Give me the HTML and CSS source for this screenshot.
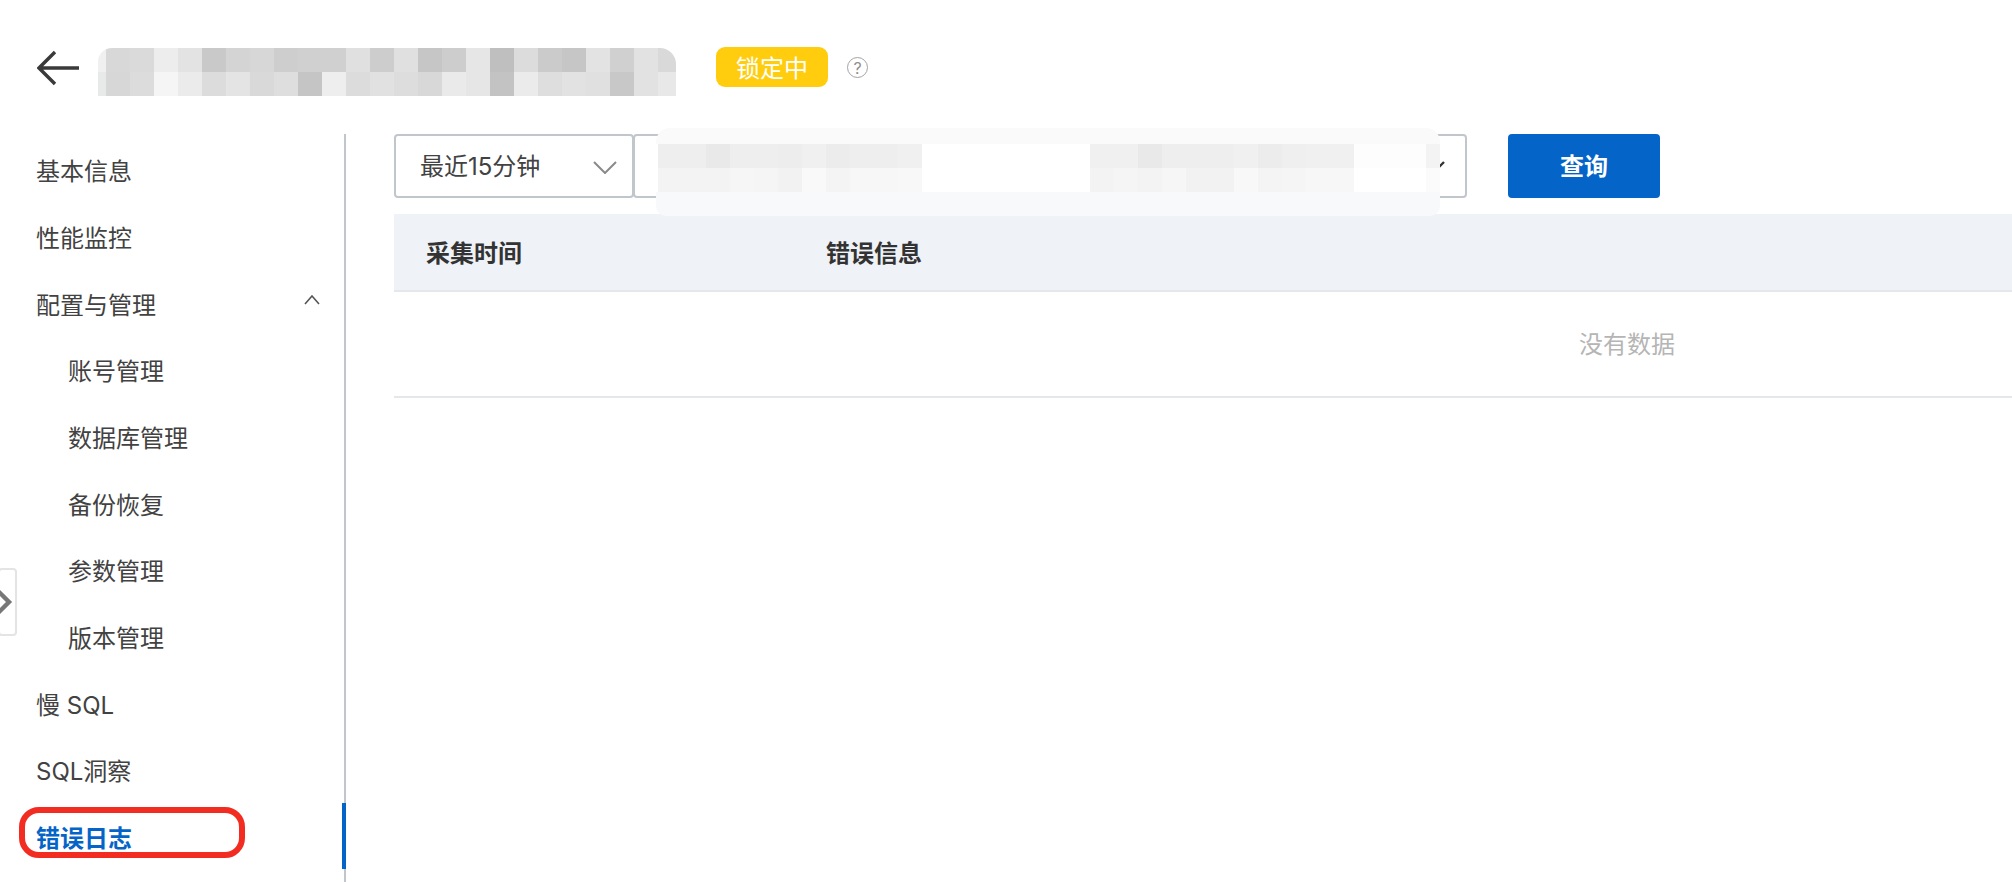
FILE: index.html
```html
<!DOCTYPE html>
<html lang="zh-CN">
<head>
<meta charset="utf-8">
<title>错误日志</title>
<link rel="stylesheet" href="styles.css">
</head>
<body>
<div class="page">
  <header class="top">
    <svg class="back" width="42" height="42" viewBox="0 0 42 42" aria-label="返回"><path d="M42 21H2M18 5L2 21l16 16" fill="none" stroke="#3a3a3a" stroke-width="3.4"/></svg>
    <div class="title-mosaic"><div class="m-a"></div><div class="m-b"></div></div>
    <span class="badge">锁定中</span>
    <span class="help">?</span>
  </header>
  <div class="body">
    <nav class="nav">
      <a class="item">基本信息</a>
      <a class="item">性能监控</a>
      <a class="item">配置与管理
        <svg class="up" width="16" height="10" viewBox="0 0 16 10"><path d="M1 9l7-8 7 8" fill="none" stroke="#555" stroke-width="1.6"/></svg>
      </a>
      <a class="item sub">账号管理</a>
      <a class="item sub">数据库管理</a>
      <a class="item sub">备份恢复</a>
      <a class="item sub">参数管理</a>
      <a class="item sub">版本管理</a>
      <a class="item">慢 SQL</a>
      <a class="item">SQL洞察</a>
      <a class="item active">错误日志<span class="mark"></span></a>
    </nav>
    <main class="main">
      <div class="toolbar">
        <div class="select first">最近15分钟
          <svg class="chev" width="24" height="13" viewBox="0 0 24 13"><path d="M1 1l11 11L23 1" fill="none" stroke="#8a8a8a" stroke-width="2"/></svg>
        </div>
        <div class="select second">
          <svg class="chev" width="24" height="13" viewBox="0 0 24 13"><path d="M1 1l11 11L23 1" fill="none" stroke="#333" stroke-width="2.4"/></svg>
        </div>
        <button class="query">查询</button>
      </div>
      <div class="table">
        <div class="thead">
          <div class="col-time">采集时间</div>
          <div>错误信息</div>
        </div>
        <div class="empty">没有数据</div>
      </div>
      <div class="cover">
        <div class="c-top"></div>
        <div class="c-a"></div>
        <div class="c-b"></div>
        <div class="c-bot"></div>
      </div>
    </main>
  </div>
  <div class="handle">
    <svg width="15" height="30" viewBox="0 0 15 30"><path d="M-2 4l11 11L-2 26" fill="none" stroke="#777" stroke-width="4.4"/></svg>
  </div>
</div>
</body>
</html>
```
FILE: styles.css
```css
* { box-sizing: border-box; }
html, body { margin: 0; padding: 0; background: #fff; }
body {
  font-family: Inter, "Noto Sans CJK SC", sans-serif;
  font-size: 24px;
  color: #424242;
}
.page {
  position: relative;
  width: 2012px;
  height: 882px;
  overflow: hidden;
}

/* header */
.top {
  display: flex;
  align-items: flex-start;
  height: 134px;
  padding: 47px 0 0 37px;
}
.back { flex: none; }
.title-mosaic {
  width: 578px;
  height: 48px;
  margin: 1px 0 0 19px;
  border-radius: 14px 16px 0 0;
  overflow: hidden;
}
.m-a, .m-b { height: 24px; }
.m-a {
  background: linear-gradient(90deg,
    #f0f0f0 0 8px, #d8d8d8 8px 32px, #dadada 32px 56px, #ededed 56px 80px, #e3e3e3 80px 104px,
    #c9c9c9 104px 128px, #d4d4d4 128px 152px, #d7d7d7 152px 176px, #cecece 176px 200px, #d0d0d0 200px 248px,
    #e0e0e0 248px 272px, #cdcdcd 272px 296px, #e0e0e0 296px 320px, #c6c6c6 320px 344px, #cdcdcd 344px 368px,
    #e6e6e6 368px 392px, #bfbfbf 392px 416px, #dcdcdc 416px 440px, #cbcbcb 440px 464px, #c6c6c6 464px 488px,
    #e3e3e3 488px 512px, #d0d0d0 512px 536px, #e2e2e2 536px 560px, #d9d9d9 560px 578px);
}
.m-b {
  background: linear-gradient(90deg,
    #e8eaea 0 8px, #d7d7d7 8px 32px, #dcdcdc 32px 56px, #f5f5f5 56px 80px, #ebebeb 80px 104px,
    #dcdcdc 104px 128px, #e4e4e4 128px 152px, #d9d9d9 152px 176px, #dedede 176px 200px, #c5c5c5 200px 224px,
    #eeeeee 224px 248px, #dcdcdc 248px 272px, #e1e1e1 272px 296px, #dddddd 296px 320px, #d8d8d8 320px 344px,
    #eaeaea 344px 368px, #e6e6e6 368px 392px, #c3c3c3 392px 416px, #ebebeb 416px 440px, #dedede 440px 464px,
    #e2e2e2 464px 488px, #e0e0e0 488px 512px, #c8c8c8 512px 536px, #e2e2e2 536px 560px, #e8e8e8 560px 578px);
}
.badge {
  flex: none;
  display: flex;
  align-items: center;
  justify-content: center;
  width: 112px;
  height: 40px;
  padding-bottom: 2px;
  margin-left: 40px;
  border-radius: 9px;
  background: #ffcd0e;
  color: #fff;
}
.help {
  flex: none;
  display: flex;
  align-items: center;
  justify-content: center;
  width: 21px;
  height: 21px;
  margin: 10px 0 0 19px;
  border: 1.5px solid #a3a3a3;
  border-radius: 50%;
  color: #8f8f8f;
  font-size: 16px;
  line-height: 1;
}

/* layout */
.body { display: flex; height: 748px; }

/* side menu */
.nav {
  flex: none;
  width: 346px;
  padding-top: 4px;
  box-shadow: inset -2px 0 #c0c6cc;
}
.item {
  position: relative;
  display: flex;
  align-items: center;
  height: 66.67px;
  padding: 0 0 3px 36px;
}
.sub { padding-left: 68px; }
.up { position: absolute; right: 26px; top: 24px; }
.active { color: #0564c8; font-weight: 700; }
.active::before {
  content: "";
  position: absolute;
  right: 0;
  top: -2px;
  width: 4px;
  height: 66px;
  background: #0564c8;
}
.mark {
  position: absolute;
  left: 19px;
  top: 2px;
  width: 226px;
  height: 51px;
  border: 6px solid #f32c22;
  border-radius: 20px;
}

/* main */
.main {
  position: relative;
  flex: none;
  width: 2466px;
  margin-left: 48px;
}
.toolbar { display: flex; height: 64px; }
.select {
  position: relative;
  display: flex;
  align-items: center;
  height: 64px;
  padding-bottom: 4px;
  border: 2px solid #c0c6cc;
  border-radius: 4px;
  background: #fff;
}
.first { width: 240px; padding-left: 24px; }
.second { width: 834px; margin-left: -1px; }
.chev { position: absolute; top: 25px; }
.first .chev { right: 15px; }
.second .chev { right: 20px; }
.query {
  width: 152px;
  height: 64px;
  margin-left: 41px;
  padding: 0 0 4px;
  border: 0;
  border-radius: 4px;
  background: #0564c8;
  color: #fff;
  font: 700 24px Inter, "Noto Sans CJK SC", sans-serif;
}
.table { margin-top: 16px; }
.thead {
  display: flex;
  align-items: center;
  height: 78px;
  padding: 0 0 2px 32px;
  border-bottom: 2px solid #e5e7e9;
  background: #eff2f7;
  font-weight: 700;
  color: #333;
}
.col-time { width: 400px; }
.empty {
  display: flex;
  align-items: center;
  justify-content: center;
  height: 106px;
  padding-bottom: 3px;
  border-bottom: 2px solid #e5e7e9;
  color: #b5b5b5;
}

/* privacy cover laid over the second select */
.cover {
  position: absolute;
  left: 262px;
  top: -6px;
  width: 784px;
  height: 88px;
  border-radius: 14px 14px 10px 10px;
  overflow: hidden;
}
.c-top { height: 16px; background: #fafafa; }
.c-a, .c-b { height: 24px; }
.c-bot { height: 24px; background: #f7f9fb; }
.c-a {
  background: linear-gradient(90deg,
    #fff 0 2px, #eeeeee 2px 50px, #e9e9e9 50px 74px, #eeeeee 74px 122px, #ededed 122px 146px,
    #f0f0f0 146px 170px, #ececec 170px 194px, #eeeeee 194px 242px, #f0f0f0 242px 266px,
    #fff 266px 434px, #eff0ef 434px 482px, #e9e9e9 482px 506px, #eeeeee 506px 578px,
    #f0f0f0 578px 602px, #ececec 602px 626px, #efefef 626px 650px, #f0f0f0 650px 698px, #fdfdfd 698px 770px, #f3f3f3 770px 784px);
}
.c-b {
  background: linear-gradient(90deg,
    #fff 0 2px, #f3f3f3 2px 74px, #f6f6f6 74px 98px, #f5f5f5 98px 122px, #f2f2f2 122px 146px,
    #f9f9f9 146px 170px, #f4f4f4 170px 194px, #f7f7f7 194px 242px, #f8f8f8 242px 266px,
    #fff 266px 434px, #f3f3f3 434px 458px, #f5f5f5 458px 482px, #f3f3f3 482px 506px, #f6f6f6 506px 530px,
    #f2f2f2 530px 578px, #f8f8f8 578px 602px, #f4f4f4 602px 626px, #f5f5f5 626px 650px, #f7f7f7 650px 698px,
    #fff 698px 770px, #fbfbfb 770px 784px);
}

/* collapse handle on the page edge */
.handle {
  position: absolute;
  left: -2px;
  top: 568px;
  display: flex;
  align-items: center;
  width: 19px;
  height: 68px;
  border: 2px solid #e4e4e4;
  border-radius: 4px;
  background: #fff;
}
```
